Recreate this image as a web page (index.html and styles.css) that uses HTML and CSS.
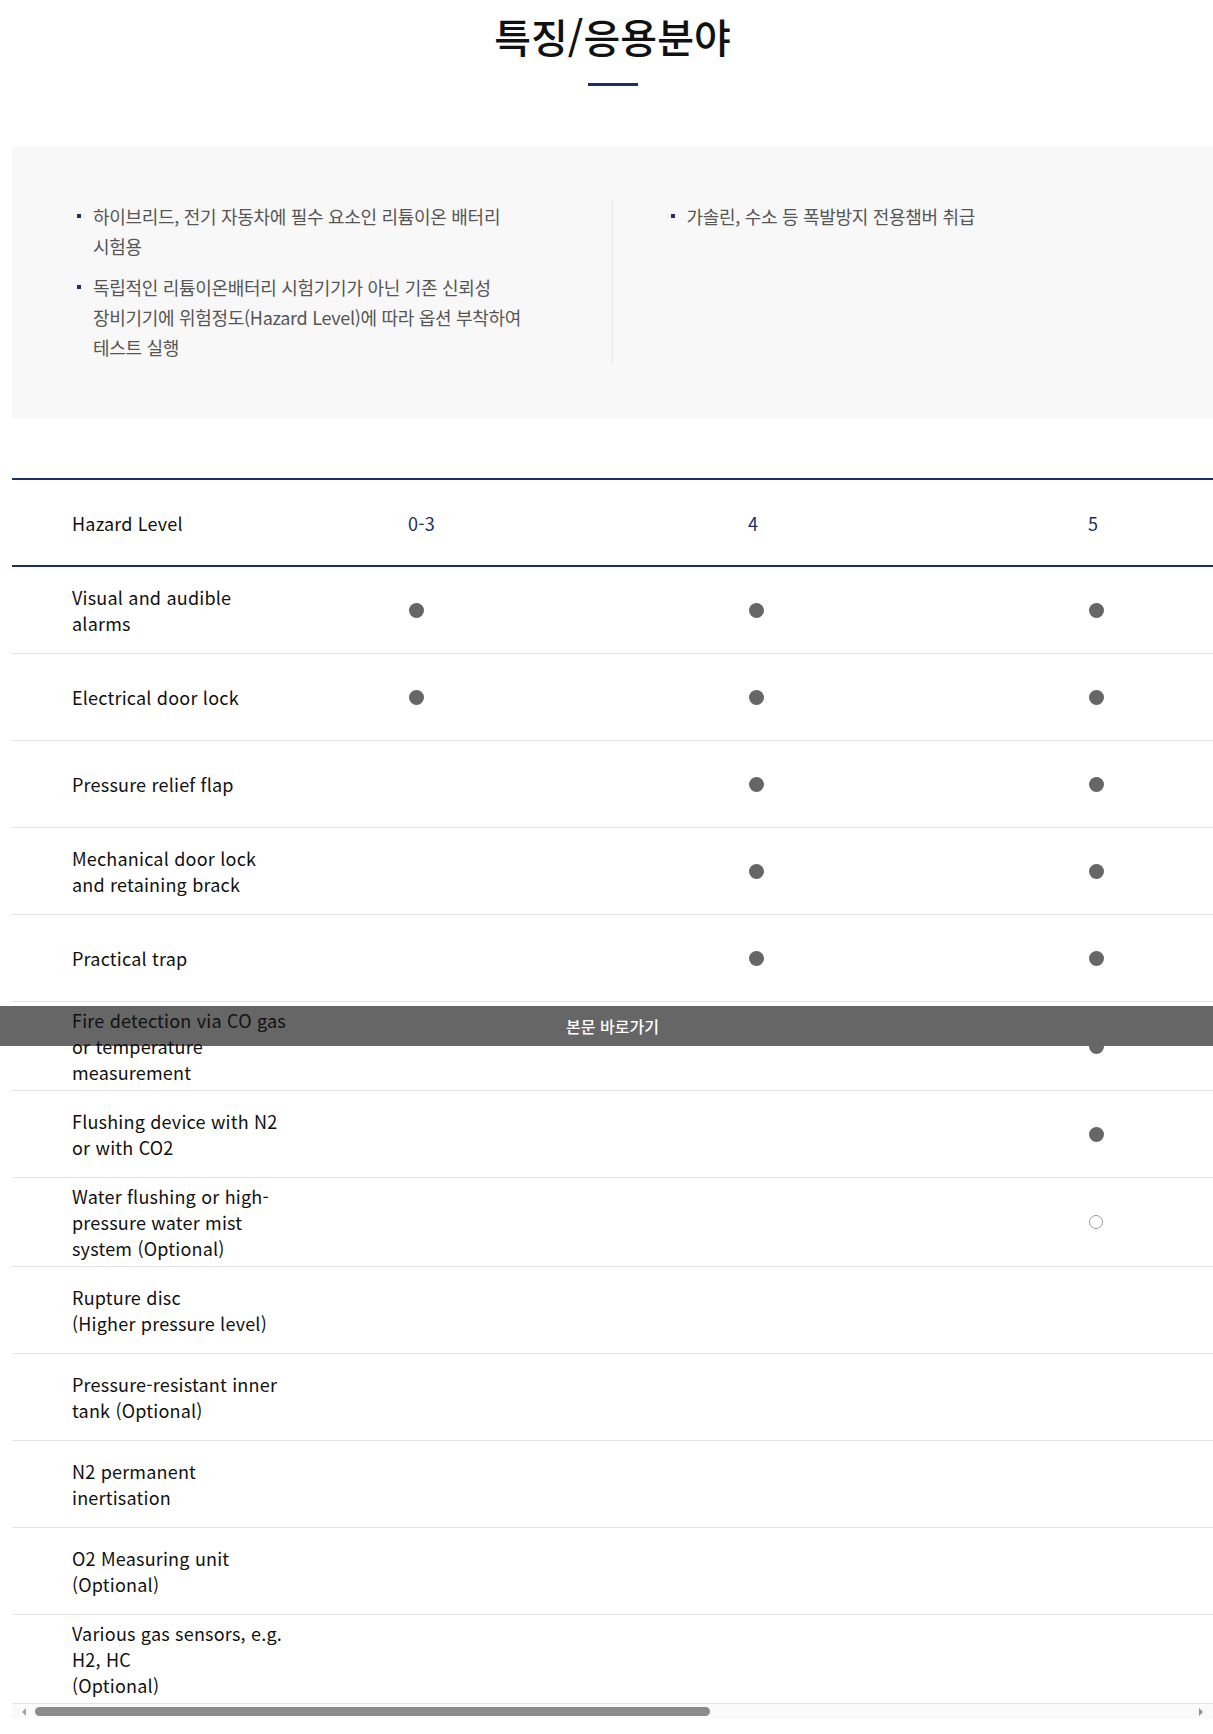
FILE: index.html
```html
<!DOCTYPE html>
<html lang="ko">
<head>
<meta charset="utf-8">
<title>특징/응용분야</title>
<link rel="stylesheet" href="styles.css">
</head>
<body>
<a class="skip-link" href="#content">본문 바로가기</a>
<div class="page" id="content">
  <div class="heading">
    <h2 class="heading-title">특징/응용분야</h2>
    <span class="heading-bar"></span>
  </div>

  <div class="feature-box">
    <div class="feature-col">
      <ul class="feature-list">
        <li>하이브리드, 전기 자동차에 필수 요소인 리튬이온 배터리 시험용</li>
        <li>독립적인 리튬이온배터리 시험기기가 아닌 기존 신뢰성 장비기기에 위험정도(Hazard Level)에 따라 옵션 부착하여 테스트 실행</li>
      </ul>
    </div>
    <div class="feature-col feature-col-right">
      <ul class="feature-list">
        <li>가솔린, 수소 등 폭발방지 전용챔버 취급</li>
      </ul>
    </div>
  </div>

  <div class="table-scroll">
    <div class="spec-table">
      <div class="spec-row spec-head">
        <div class="cell label">Hazard Level</div>
        <div class="cell level">0-3</div>
        <div class="cell level">4</div>
        <div class="cell level">5</div>
      </div>
      <div class="spec-row">
        <div class="cell label">Visual and audible<br>alarms</div>
        <div class="cell"><span class="dot"></span></div>
        <div class="cell"><span class="dot"></span></div>
        <div class="cell"><span class="dot"></span></div>
      </div>
      <div class="spec-row">
        <div class="cell label">Electrical door lock</div>
        <div class="cell"><span class="dot"></span></div>
        <div class="cell"><span class="dot"></span></div>
        <div class="cell"><span class="dot"></span></div>
      </div>
      <div class="spec-row">
        <div class="cell label">Pressure relief flap</div>
        <div class="cell"></div>
        <div class="cell"><span class="dot"></span></div>
        <div class="cell"><span class="dot"></span></div>
      </div>
      <div class="spec-row">
        <div class="cell label">Mechanical door lock<br>and retaining brack</div>
        <div class="cell"></div>
        <div class="cell"><span class="dot"></span></div>
        <div class="cell"><span class="dot"></span></div>
      </div>
      <div class="spec-row">
        <div class="cell label">Practical trap</div>
        <div class="cell"></div>
        <div class="cell"><span class="dot"></span></div>
        <div class="cell"><span class="dot"></span></div>
      </div>
      <div class="spec-row">
        <div class="cell label">Fire detection via CO gas<br>or temperature<br>measurement</div>
        <div class="cell"></div>
        <div class="cell"></div>
        <div class="cell"><span class="dot"></span></div>
      </div>
      <div class="spec-row">
        <div class="cell label">Flushing device with N2<br>or with CO2</div>
        <div class="cell"></div>
        <div class="cell"></div>
        <div class="cell"><span class="dot"></span></div>
      </div>
      <div class="spec-row">
        <div class="cell label">Water flushing or high-<br>pressure water mist<br>system (Optional)</div>
        <div class="cell"></div>
        <div class="cell"></div>
        <div class="cell"><span class="dot dot-open"></span></div>
      </div>
      <div class="spec-row">
        <div class="cell label">Rupture disc<br>(Higher pressure level)</div>
        <div class="cell"></div>
        <div class="cell"></div>
        <div class="cell"></div>
      </div>
      <div class="spec-row">
        <div class="cell label">Pressure-resistant inner<br>tank (Optional)</div>
        <div class="cell"></div>
        <div class="cell"></div>
        <div class="cell"></div>
      </div>
      <div class="spec-row">
        <div class="cell label">N2 permanent<br>inertisation</div>
        <div class="cell"></div>
        <div class="cell"></div>
        <div class="cell"></div>
      </div>
      <div class="spec-row">
        <div class="cell label">O2 Measuring unit<br>(Optional)</div>
        <div class="cell"></div>
        <div class="cell"></div>
        <div class="cell"></div>
      </div>
      <div class="spec-row">
        <div class="cell label">Various gas sensors, e.g.<br>H2, HC<br>(Optional)</div>
        <div class="cell"></div>
        <div class="cell"></div>
        <div class="cell"></div>
      </div>
    </div>
  </div>
  <div class="scrollbar" aria-hidden="true">
    <span class="scroll-arrow scroll-arrow-left"></span>
    <span class="scroll-track"><span class="scroll-thumb"></span></span>
    <span class="scroll-arrow scroll-arrow-right"></span>
  </div>
</div>
</body>
</html>
```

FILE: styles.css
```css
html, body {
  margin: 0;
  padding: 0;
  background: #fff;
}

body {
  font-family: "Noto Sans CJK KR", "Noto Sans", sans-serif;
  color: #222;
  position: relative;
}

.page {
  position: relative;
  z-index: 1;
  margin-left: 12px;
  padding-bottom: 15px;
}

.skip-link {
  position: absolute;
  top: 1006px;
  left: 0;
  right: 0;
  height: 40px;
  line-height: 40px;
  padding-left: 12px;
  background: #666;
  color: #fff;
  font-size: 16px;
  font-weight: 500;
  text-align: center;
  text-decoration: none;
  z-index: 0;
}

.heading {
  display: flex;
  flex-direction: column;
  align-items: center;
  padding-top: 8px;
}

.heading-title {
  margin: 0;
  font-size: 40px;
  font-weight: 500;
  line-height: 56px;
  letter-spacing: 0;
  color: #111;
}

.heading-bar {
  display: block;
  width: 50px;
  height: 3px;
  margin-top: 19px;
  background: #1b2f61;
}

.feature-box {
  display: grid;
  grid-template-columns: 1fr 1fr;
  align-items: start;
  margin-top: 60px;
  background: #f8f8f8;
  padding: 55px 67px 54px 65px;
}

.feature-col {
  padding-right: 70px;
  padding-bottom: 2px;
}

.feature-col-right {
  align-self: stretch;
  border-left: 1px solid #e6e6e6;
  padding-left: 58px;
  padding-right: 0;
}

.feature-list {
  list-style: none;
  margin: 0;
  padding: 0;
}

.feature-list li {
  position: relative;
  padding-left: 16px;
  margin-bottom: 11px;
  font-size: 18px;
  line-height: 30px;
  letter-spacing: -0.3px;
  color: #555;
  word-break: keep-all;
}

.feature-list li:last-child {
  margin-bottom: 0;
}

.feature-list li::before {
  content: "";
  position: absolute;
  left: 0;
  top: 13px;
  width: 4px;
  height: 4px;
  background: #1b2f61;
}

.table-scroll {
  margin-top: 60px;
  overflow: hidden;
}

.spec-table {
  width: 2078px;
  border-top: 2px solid #1b2f61;
}

.spec-row {
  display: grid;
  grid-template-columns: 336px 340px 340px 1fr;
  align-items: center;
  min-height: 86px;
  border-bottom: 1px solid #e2e2e2;
}

.spec-head {
  min-height: 85px;
  border-bottom: 2px solid #1b2f61;
}

.cell {
  padding: 5px 0 5px 60px;
  font-size: 18px;
  line-height: 26px;
  letter-spacing: 0.2px;
  color: #111;
}

.label {
  white-space: nowrap;
}

.level {
  color: #1b2f61;
}

.dot {
  display: block;
  width: 15px;
  height: 15px;
  margin-left: 1px;
  border-radius: 50%;
  background: #666;
}

.dot-open {
  box-sizing: border-box;
  width: 14px;
  height: 14px;
  background: transparent;
  border: 1px solid #999;
}

.scrollbar {
  display: flex;
  align-items: center;
  height: 15px;
  background: #fafafa;
}

.scroll-arrow {
  flex: 0 0 auto;
  width: 0;
  height: 0;
  border-top: 4px solid transparent;
  border-bottom: 4px solid transparent;
}

.scroll-arrow-left {
  margin: 0 9px 0 10px;
  border-right: 4px solid #a3a3a3;
}

.scroll-arrow-right {
  margin: 0 10px 0 9px;
  border-left: 4px solid #8f8f8f;
}

.scroll-track {
  flex: 1 1 auto;
  display: flex;
  align-items: center;
  height: 15px;
}

.scroll-thumb {
  display: block;
  width: 675px;
  height: 9px;
  border-radius: 5px;
  background: #8b8b8b;
}
```
